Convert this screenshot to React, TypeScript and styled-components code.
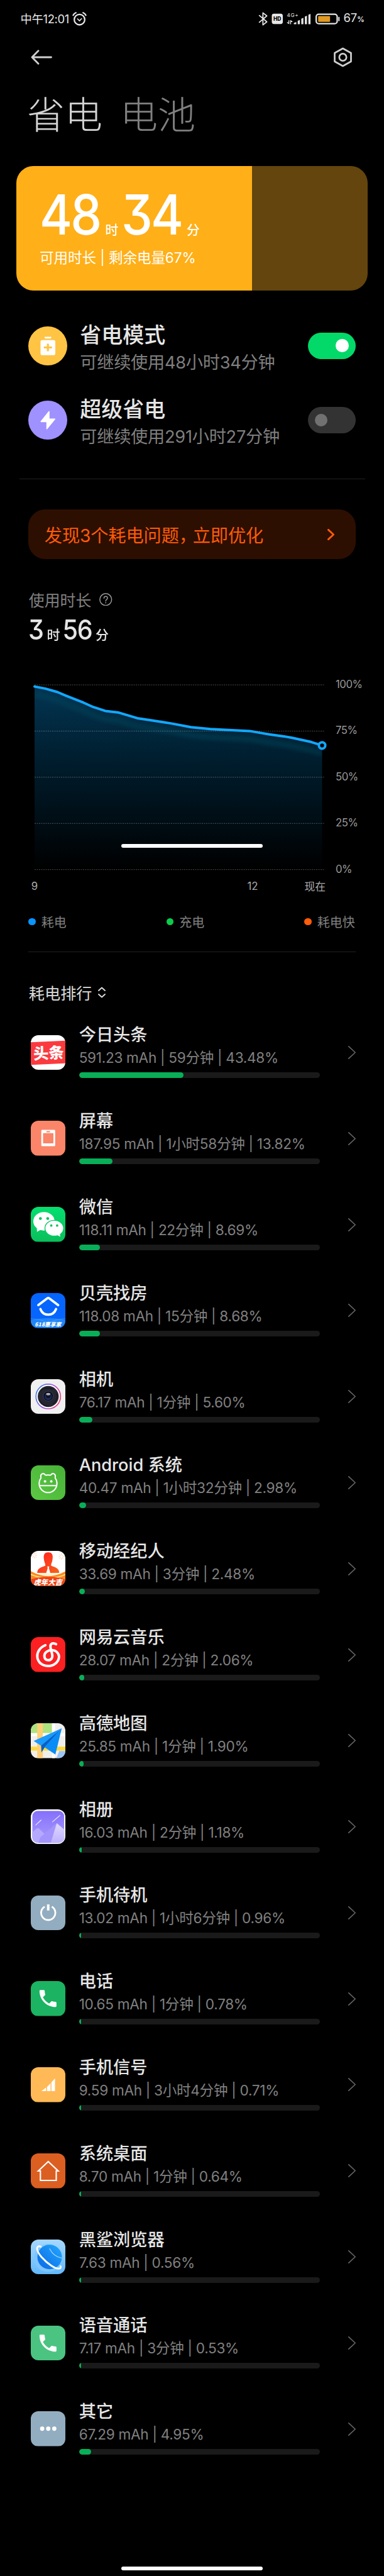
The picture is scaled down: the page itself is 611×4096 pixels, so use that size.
import React from "react";
import styled, { createGlobalStyle } from "styled-components";

const fontStack = `Inter, "Noto Sans CJK SC", "Noto Sans", sans-serif`;

const GlobalStyle = createGlobalStyle`
  html, body { margin: 0; padding: 0; background: #000; }
  body { font-family: ${fontStack}; color: #e6e6e6; -webkit-font-smoothing: antialiased; }
  * { box-sizing: border-box; }
`;

/* ---------- shell ---------- */

const Screen = styled.main`
  position: relative;
  width: 611px;
  height: 4096px;
  overflow: hidden;
  background: #000;
  white-space: nowrap;
`;

const GestureBar = styled.div<{ $top: number }>`
  position: absolute;
  top: ${(p) => p.$top}px;
  left: 192.5px;
  width: 225.5px;
  height: 6px;
  border-radius: 3px;
  background: #fff;
`;

const StatusBar = styled.header`
  display: flex;
  align-items: center;
  justify-content: space-between;
  height: 59px;
  padding: 0 31.5px 0 32.5px;
`;

const StatusGroup = styled.div`
  display: flex;
  align-items: center;
`;

const Clock = styled.span`
  font-size: 18.4px;
  line-height: 24px;
  letter-spacing: -0.35px;
  margin-right: 5px;
`;

const BatteryText = styled.span`
  font-size: 18.5px;
  line-height: 24px;
  letter-spacing: -0.2px;
  margin-left: 6px;
  small {
    font-size: 11.5px;
    font-weight: 600;
  }
`;

const NavBar = styled.nav`
  display: flex;
  align-items: center;
  justify-content: space-between;
  height: 63px;
  padding: 0 50px 0 49px;
`;

const Tabs = styled.div`
  display: flex;
  align-items: center;
  gap: 28px;
  height: 114px;
  padding: 0 43px;
`;

const Tab = styled.h1<{ $active?: boolean }>`
  margin: 0;
  font-family: "Noto Sans CJK SC", sans-serif;
  font-weight: 300;
  font-size: 60px;
  line-height: 80px;
  color: ${(p) => (p.$active ? "#d4d4d4" : "#808080")};
`;

/* ---------- battery card ---------- */

const BatteryCard = styled.section`
  height: 198px;
  margin: 28px 26px 0;
  padding: 38.5px 37px 0;
  border-radius: 27px;
  color: #fff;
  background: linear-gradient(90deg, #ffaf17 67%, #63450d 67%);
`;

/* Narrow numerals with flat-topped threes; the unit characters keep their own width. */
const Duration = styled.div<{ $size: number; $line: number; $space: number; $before: number; $after: number }>`
  display: flex;
  align-items: baseline;
  height: ${(p) => p.$line}px;
  font-size: ${(p) => p.$size}px;
  line-height: ${(p) => p.$line}px;
  font-weight: 500;
  letter-spacing: ${(p) => p.$space}px;
  font-feature-settings: "cv09" 1;
  transform: scaleX(0.9);
  transform-origin: left;
  small {
    font-size: 21px;
    letter-spacing: 0;
    margin: 0 ${(p) => p.$after}px 0 ${(p) => p.$before}px;
    transform: scaleX(1.11);
  }
`;

const CardCaption = styled.div`
  margin-top: 15.5px;
  font-size: 22.6px;
  line-height: 32px;
  letter-spacing: -0.1px;
`;

/* ---------- power modes ---------- */

const ModeList = styled.section`
  padding: 28.2px 45.3px 33.6px;
`;

const ModeRow = styled.div`
  display: flex;
  align-items: center;
  height: 118.7px;
`;

const ModeBadge = styled.div<{ $color: string }>`
  display: flex;
  width: 62px;
  height: 62px;
  border-radius: 50%;
  background: ${(p) => p.$color};
`;

const ModeText = styled.div`
  flex: 1;
  padding: 10.5px 0 0 20px;
`;

const ModeTitle = styled.div`
  font-size: 34px;
  line-height: 44px;
  font-weight: 500;
`;

const ModeNote = styled.div`
  font-size: 27.2px;
  line-height: 44px;
  letter-spacing: -0.25px;
  color: #7f7f7f;
`;

const Toggle = styled.div<{ $on?: boolean }>`
  display: flex;
  align-items: center;
  justify-content: ${(p) => (p.$on ? "flex-end" : "flex-start")};
  width: 76px;
  height: 42px;
  padding: 0 11px;
  border-radius: 21px;
  background: ${(p) => (p.$on ? "#02d968" : "#333")};
  &::after {
    content: "";
    width: 20.4px;
    height: 20.4px;
    border-radius: 50%;
    background: ${(p) => (p.$on ? "#fff" : "#717171")};
  }
`;

const Divider = styled.hr<{ $inset: number; $top?: number }>`
  height: 1px;
  margin: ${(p) => p.$top ?? 0}px ${(p) => p.$inset}px 0;
  border: 0;
  background: #202020;
`;

const Warning = styled.section`
  display: flex;
  align-items: center;
  justify-content: space-between;
  height: 78.7px;
  margin: 48px 45.3px 0;
  padding: 0 34px 0 25.5px;
  border-radius: 27px;
  background: #2d0f01;
  color: #ff5b08;
  font-size: 28.2px;
  letter-spacing: -0.1px;
`;

const Comma = styled.span`
  display: inline-block;
  width: 22px;
`;

/* ---------- usage chart ---------- */

const UsageLabel = styled.div`
  display: flex;
  align-items: center;
  gap: 13px;
  height: 36px;
  margin: 46px 45.8px 0;
  font-size: 24.9px;
  color: #808080;
`;

const UsageValue = styled.div`
  height: 118px;
  padding: 8px 45px 0;
`;

const ChartRow = styled.div`
  display: flex;
  height: 293.7px;
  padding-left: 55px;
`;

const ChartSvg = styled.svg`
  display: block;
  flex: none;
  overflow: visible;
`;

const PercentAxis = styled.div`
  display: flex;
  flex-direction: column;
  justify-content: space-between;
  margin: -1px 0 1px 17px;
  font-size: 16.8px;
  letter-spacing: -0.5px;
  color: #999;
  span {
    height: 0;
    line-height: 0;
  }
`;

const TimeAxis = styled.div`
  display: grid;
  grid-template-columns: 20px 327px 20px 106px;
  align-items: center;
  height: 52px;
  padding-left: 45px;
  font-size: 16.8px;
  color: #aaa;
  text-align: center;
  span:nth-child(2) {
    grid-column: 3;
  }
  span:nth-child(3) {
    text-align: right;
  }
`;

const Legend = styled.div`
  display: flex;
  align-items: center;
  height: 62px;
  padding-left: 45.3px;
`;

const LegendItem = styled.div<{ $color: string }>`
  display: flex;
  flex: none;
  align-items: center;
  gap: 9px;
  width: 219.5px;
  font-size: 20px;
  color: #808080;
  &:last-child {
    width: auto;
  }
  &::before {
    content: "";
    width: 11.4px;
    height: 11.4px;
    border-radius: 50%;
    background: ${(p) => p.$color};
  }
`;

/* ---------- ranking ---------- */

const RankHeader = styled.div`
  display: flex;
  align-items: center;
  gap: 8px;
  height: 54px;
  margin-top: 36.5px;
  padding-left: 45.8px;
  font-size: 25.2px;
  color: #dcdcdc;
`;

const RankList = styled.ul`
  list-style: none;
  margin: 0;
  padding: 0.5px 45.3px 0 48.6px;
`;

const RankRow = styled.li`
  display: flex;
  align-items: center;
  height: 136.81px;
`;

const AppIcon = styled.svg`
  display: block;
  flex: none;
  width: 55.5px;
  height: 55.5px;
  border-radius: 12px;
  overflow: hidden;
`;

const RankBody = styled.div`
  flex: 1;
  margin: 0 44.7px 0 21.6px;
  padding-bottom: 4px;
`;

const AppName = styled.div`
  font-size: 27.2px;
  line-height: 36px;
  font-weight: 500;
`;

const AppMeta = styled.div`
  font-size: 22.6px;
  line-height: 36px;
  letter-spacing: -0.3px;
  color: #808080;
`;

const Track = styled.div`
  height: 9px;
  margin-top: 5px;
  border-radius: 4.5px;
  background: #1a1a1a;
  overflow: hidden;
`;

const Fill = styled.div`
  height: 100%;
  min-width: 3px;
  border-radius: 4.5px;
  background: #09ae58;
`;

/* ---------- data ---------- */

// [share of the time axis, battery level]
const levels: [number, number][] = [
  [0, 99.1], [0.037, 98], [0.08, 96.1], [0.11, 94.1], [0.17, 90.4], [0.204, 88],
  [0.246, 85.9], [0.293, 85], [0.357, 82], [0.408, 80.8], [0.476, 79.1],
  [0.544, 77.1], [0.612, 76.1], [0.749, 75], [0.783, 74.1], [0.817, 73.2],
  [0.868, 72.1], [0.894, 71.4], [0.962, 69.1], [1, 67.2],
];

const PLOT_W = 457.5;
const PLOT_H = 293.7;
const linePath = levels
  .map(([t, v], i) => `${i ? "L" : "M"}${(t * PLOT_W).toFixed(1)} ${((1 - v / 100) * PLOT_H).toFixed(1)}`)
  .join(" ");
const endY = (1 - levels[levels.length - 1][1] / 100) * PLOT_H;

const CALL =
  "M6.62 10.79c1.44 2.83 3.76 5.14 6.59 6.59l2.2-2.2c.27-.27.67-.36 1.02-.24 1.12.37 2.33.57 3.57.57.55 0 1 .45 1 1V20c0 .55-.45 1-1 1-9.39 0-17-7.61-17-17 0-.55.45-1 1-1h3.5c.55 0 1 .45 1 1 0 1.25.2 2.45.57 3.57.11.35.03.74-.25 1.02l-2.2 2.2z";

const callIcon = (bg: string) => (
  <>
    <rect width="98" height="98" fill={bg} />
    <path d={CALL} fill="#fff" transform="translate(16.5 17) scale(2.65)" />
  </>
);

const cjkBold = { fontFamily: '"Noto Sans CJK SC", sans-serif', fontWeight: 900 } as const;

const icons: Record<string, React.ReactNode> = {
  toutiao: (
    <>
      <rect width="98" height="98" fill="#fff" />
      <path d="M0 20L98 15.500V79L0 83.500Z" fill="#fb3a3f" />
      <text x="7" y="66" fontSize="43" fill="#fff" transform="rotate(-2.500 49 49)" {...cjkBold}>头条</text>
    </>
  ),
  screen: (
    <>
      <rect width="98" height="98" fill="#fa8569" />
      <path fillRule="evenodd" fill="#fff" d="M32 25.700h34a2.500 2.500 0 0 1 2.500 2.500v41a2.500 2.500 0 0 1-2.500 2.500H32a2.500 2.500 0 0 1-2.500-2.500v-41a2.500 2.500 0 0 1 2.500-2.500zM34.500 35v28.500h29V35zM44 29v3.500h10V29z" />
    </>
  ),
  wechat: (
    <>
      <defs>
        <linearGradient id="wx" x1="0" y1="0" x2="0" y2="1">
          <stop offset="0" stopColor="#05de70" />
          <stop offset="1" stopColor="#0abf5b" />
        </linearGradient>
      </defs>
      <rect width="98" height="98" fill="url(#wx)" />
      <path d="M17 60L17.500 70L30 63Z" fill="#fff" />
      <ellipse cx="37" cy="40.500" rx="30" ry="26" fill="#fff" />
      <circle cx="27" cy="32.500" r="4" fill="#07c160" />
      <circle cx="47.500" cy="32.500" r="4" fill="#07c160" />
      <ellipse cx="66" cy="60" rx="27.500" ry="23.500" fill="#09c862" />
      <ellipse cx="66" cy="60" rx="25" ry="21" fill="#fff" />
      <path d="M72 78L83 84L81 72Z" fill="#fff" />
      <circle cx="57.500" cy="52.500" r="3.300" fill="#07c160" />
      <circle cx="74" cy="52.500" r="3.300" fill="#07c160" />
    </>
  ),
  beike: (
    <>
      <rect width="98" height="98" fill="#0565fe" />
      <path d="M0 76C30 69 68 69 98 76V98H0Z" fill="#2185f8" />
      <path d="M0 72C30 74 50 80 60 98M98 72C68 74 48 80 38 98" stroke="#56aefb" strokeWidth="1" fill="none" />
      <path d="M21 34L46 15Q49 13 52 15L77 34" stroke="#fff" strokeWidth="6.500" strokeLinecap="round" fill="none" />
      <path d="M27 45C35 66 63 66 71 45" stroke="#fff" strokeWidth="6.500" strokeLinecap="round" fill="none" />
      <text x="11" y="94" fontSize="15" fill="#fff" fontStyle="italic" textLength="74" {...cjkBold}>618惠享家</text>
    </>
  ),
  camera: (
    <>
      <defs>
        <linearGradient id="ring" x1="0" y1="0.300" x2="1" y2="0.700">
          <stop offset="0" stopColor="#4a82e6" />
          <stop offset="0.500" stopColor="#a45ae8" />
          <stop offset="1" stopColor="#f2406e" />
        </linearGradient>
      </defs>
      <rect width="98" height="98" fill="#f0f0f1" />
      <circle cx="49" cy="48.500" r="34.500" fill="#fff" stroke="url(#ring)" strokeWidth="3" />
      <circle cx="49" cy="48.500" r="29.500" fill="#25262f" />
      <path d="M27 33Q40 20 62 28M73 40Q78 58 62 70M51 76Q32 74 24 58" stroke="#0f1016" strokeWidth="1.500" fill="none" />
      <circle cx="49" cy="47.500" r="14" fill="#0c0d18" stroke="#3b4468" strokeWidth="1.500" />
      <circle cx="49" cy="48.500" r="10" fill="#1f2a66" />
      <circle cx="49" cy="46.500" r="7" fill="#11131f" />
      <ellipse cx="49" cy="42" rx="6" ry="3.500" fill="#a9adb8" />
    </>
  ),
  android: (
    <>
      <defs>
        <linearGradient id="droid" x1="0" y1="1" x2="1" y2="0">
          <stop offset="0" stopColor="#5cc944" />
          <stop offset="1" stopColor="#47b137" />
        </linearGradient>
      </defs>
      <rect width="98" height="98" fill="url(#droid)" />
      <g fill="none" stroke="#fff" strokeWidth="3.600" strokeLinejoin="round">
        <path d="M29 35C25 25 36 18 41 28M56 28C61 18 72 25 68 35" />
        <path d="M41 28Q48.500 26 56 28M68 35A25 25.500 0 1 1 29 35" />
        <path d="M23.500 57H73.500" />
      </g>
      <circle cx="40" cy="45" r="3.600" fill="#fff" />
      <circle cx="57.500" cy="45" r="3.600" fill="#fff" />
    </>
  ),
  agent: (
    <>
      <defs>
        <linearGradient id="man" x1="0" y1="0" x2="1" y2="1">
          <stop offset="0.200" stopColor="#ff2a1f" />
          <stop offset="1" stopColor="#f4661b" />
        </linearGradient>
      </defs>
      <rect width="98" height="98" fill="#fff" />
      <path d="M2 12l5 1M18 12l-5 1M10 4v5M10 21v-5M4 6l4 4M16 6l-4 4M4 19l4-4M16 19l-4-4M78 16l5 0M94 16l-5 0M86 7v5M86 25v-5M80 10l4 4M92 10l-4 4M80 22l4-4M92 22l-4-4" stroke="#f3a981" strokeWidth="1" />
      <path d="M0 57Q49 84 98 57V98H0Z" fill="#ff8a1e" />
      <path d="M0 66Q49 88 98 66" stroke="#ffe08a" strokeWidth="3" fill="none" />
      <path d="M22 62H77Q49 80 22 62Z" fill="#fff3cf" />
      <path d="M0 80Q49 66 98 80V98H0Z" fill="#ef4318" />
      <path d="M49 4C38 4 35 12 37 24C38 33 41 35 41 41C34 46 18 46 18 62H80C80 46 64 46 57 41C57 35 60 33 61 24C63 12 60 4 49 4Z" fill="url(#man)" />
      <path d="M46 43.500H52L51 48L55 63H43L47.500 48Z" fill="#fff" />
      <text x="8" y="95" fontSize="20" fill="#fff" fontStyle="italic" {...cjkBold}>虎年大吉</text>
    </>
  ),
  netease: (
    <>
      <rect width="98" height="98" fill="#fb2022" />
      <path d="M41 23C23 30 16 46 19 60C24 79 44 84 58 80C78 74 84 55 75 44C69 36 54 34 45 41C34 49 37 65 49 65C58 65 62 58 60 48L55.500 30C53 18 62 15 71 20" fill="none" stroke="#fff" strokeWidth="7" strokeLinecap="round" strokeLinejoin="round" />
    </>
  ),
  amap: (
    <>
      <rect width="98" height="98" fill="#f0efec" />
      <rect width="59" height="28" fill="#aee27f" />
      <path d="M0 32H98M64 0V98" stroke="#fff" strokeWidth="8" />
      <rect y="66" width="98" height="11" fill="#fdd93c" />
      <rect x="18" width="16" height="98" fill="#ffcf75" />
      <path d="M72 98L80 78H98V98Z" fill="#9cc4f8" />
      <path d="M8 50L87 14L30 64Z" fill="#1a9bff" />
      <path d="M29 63L87 14L39 68L30 82Z" fill="#0a5fc0" />
      <path d="M38 67L87 14L69 88Z" fill="#0a8cf7" />
    </>
  ),
  album: (
    <>
      <defs>
        <linearGradient id="sky" x1="0" y1="0" x2="0" y2="1">
          <stop offset="0" stopColor="#8370fb" />
          <stop offset="1" stopColor="#ab9dfc" />
        </linearGradient>
        <linearGradient id="snow" x1="0" y1="0" x2="0" y2="1">
          <stop offset="0" stopColor="#e0d9ff" />
          <stop offset="1" stopColor="#bcafff" />
        </linearGradient>
        <clipPath id="albumClip"><rect x="4" y="4" width="90" height="90" rx="16" /></clipPath>
      </defs>
      <rect width="98" height="98" fill="#fff" />
      <g clipPath="url(#albumClip)">
        <rect x="4" y="4" width="90" height="90" fill="url(#sky)" />
        <path d="M0 68L18 53Q20 52 22 53L40 70L52 98H0Z" fill="#b5a9fd" />
        <path d="M27 78L70 41Q73 38 76 41L98 60V98H20Z" fill="#a394fb" />
        <path d="M55 98L73 39L98 60V98Z" fill="url(#snow)" />
        <path d="M14 44L29 30M61 35L82 17" stroke="#efe9ff" strokeWidth="2" strokeLinecap="round" />
      </g>
    </>
  ),
  standby: (
    <>
      <rect width="98" height="98" fill="#93adc0" />
      <path d="M39 31.500A20 20 0 1 0 59 31.500" fill="none" stroke="#fff" strokeWidth="5" />
      <rect x="45.500" y="25" width="7" height="17" fill="#fff" />
    </>
  ),
  phone: callIcon("#1cb362"),
  signal: (
    <>
      <rect width="98" height="98" fill="#ffb957" />
      <path d="M30 67L43 57V67ZM45.500 55.500L55.500 45V67H45.500ZM58 42.500L68 31.500V67H58Z" fill="#fff" />
    </>
  ),
  desktop: (
    <>
      <rect width="98" height="98" fill="#dc5f22" />
      <path d="M21 49.500L49 23L77 49.500H71.500V76H27V49.500Z" fill="none" stroke="#fff" strokeWidth="3.800" strokeLinejoin="miter" />
    </>
  ),
  browser: (
    <>
      <defs>
        <linearGradient id="bsky" x1="0" y1="0" x2="0" y2="1">
          <stop offset="0" stopColor="#a5d8ff" />
          <stop offset="1" stopColor="#63b8fd" />
        </linearGradient>
        <linearGradient id="planet" x1="0" y1="1" x2="1" y2="0">
          <stop offset="0" stopColor="#0a68e6" />
          <stop offset="1" stopColor="#23a8fc" />
        </linearGradient>
      </defs>
      <rect width="98" height="98" fill="url(#bsky)" />
      <circle cx="48" cy="52" r="39" fill="#7fc6fe" />
      <circle cx="53" cy="49" r="34.500" fill="url(#planet)" />
      <path d="M53 26Q64 48 87 52" stroke="#a9dcff" strokeWidth="2" fill="none" strokeLinecap="round" />
      <path d="M28 20C14 15 14 30 30 49C46 67 70 85 82 81Q85 79 83.500 75" stroke="#fff" strokeWidth="5" fill="none" strokeLinecap="round" />
    </>
  ),
  voice: callIcon("#4bc482"),
  other: (
    <>
      <rect width="98" height="98" fill="#93adc0" />
      <circle cx="32" cy="49" r="6" fill="#fff" />
      <circle cx="49" cy="49" r="6" fill="#fff" />
      <circle cx="66" cy="49" r="6" fill="#fff" />
    </>
  ),
};

const apps = [
  { icon: "toutiao", name: "今日头条", mah: "591.23", time: "59分钟", share: 43.48 },
  { icon: "screen", name: "屏幕", mah: "187.95", time: "1小时58分钟", share: 13.82 },
  { icon: "wechat", name: "微信", mah: "118.11", time: "22分钟", share: 8.69 },
  { icon: "beike", name: "贝壳找房", mah: "118.08", time: "15分钟", share: 8.68 },
  { icon: "camera", name: "相机", mah: "76.17", time: "1分钟", share: 5.6 },
  { icon: "android", name: "Android 系统", mah: "40.47", time: "1小时32分钟", share: 2.98 },
  { icon: "agent", name: "移动经纪人", mah: "33.69", time: "3分钟", share: 2.48 },
  { icon: "netease", name: "网易云音乐", mah: "28.07", time: "2分钟", share: 2.06 },
  { icon: "amap", name: "高德地图", mah: "25.85", time: "1分钟", share: 1.9 },
  { icon: "album", name: "相册", mah: "16.03", time: "2分钟", share: 1.18 },
  { icon: "standby", name: "手机待机", mah: "13.02", time: "1小时6分钟", share: 0.96 },
  { icon: "phone", name: "电话", mah: "10.65", time: "1分钟", share: 0.78 },
  { icon: "signal", name: "手机信号", mah: "9.59", time: "3小时4分钟", share: 0.71 },
  { icon: "desktop", name: "系统桌面", mah: "8.70", time: "1分钟", share: 0.64 },
  { icon: "browser", name: "黑鲨浏览器", mah: "7.63", time: "", share: 0.56 },
  { icon: "voice", name: "语音通话", mah: "7.17", time: "3分钟", share: 0.53 },
  { icon: "other", name: "其它", mah: "67.29", time: "", share: 4.95 },
];

/* ---------- small drawings ---------- */

const AlarmIcon = () => (
  <svg width="23" height="22" viewBox="0 0 40 38" fill="none" stroke="#e6e6e6" strokeLinecap="round">
    <circle cx="20" cy="21" r="14.500" strokeWidth="4" />
    <path d="M14.500 19L20 24.500L25.500 18.500" strokeWidth="3" strokeLinejoin="round" />
    <path d="M2.500 9Q5 4 10 2M37.500 9Q35 4 30 2" strokeWidth="4" />
  </svg>
);

const StatusIcons = () => (
  <svg width="130" height="24" viewBox="0 0 230 42" fill="none">
    <path d="M3 11.500L24 29.500L13 38V4L24 12.500L3 30.500" stroke="#e6e6e6" strokeWidth="3.200" strokeLinejoin="round" strokeLinecap="round" />
    <rect x="38" y="6.500" width="31" height="29" rx="6" fill="#e6e6e6" />
    <text x="53.500" y="26.500" textAnchor="middle" fontSize="15" fontWeight="800" fontFamily="Inter" fill="#000">HD</text>
    <text x="80.500" y="15.500" fontSize="14.500" fontFamily="Inter" fill="#e6e6e6" textLength="32">4G+</text>
    <path d="M86 25V34L81 31M91 36V26L96 29" stroke="#e6e6e6" strokeWidth="2.400" />
    <path d="M100 36V32.500L107 30V36ZM111 36V26.500L117 24V36ZM121 36V20.500L127 18V36ZM131 36V14.500L137 12V36ZM141 36V9.500L147 7V36Z" fill="#e6e6e6" />
    <rect x="163" y="8" width="59" height="26.500" rx="7" stroke="#e6e6e6" strokeWidth="4" />
    <rect x="168.500" y="13" width="33.500" height="16.500" rx="2" fill="#e29a22" />
    <path d="M227 17V26" stroke="#e6e6e6" strokeWidth="3.500" strokeLinecap="round" />
  </svg>
);

const BackIcon = () => (
  <svg width="34" height="24" viewBox="0 0 34 24" fill="none" stroke="#cfcfcf" strokeWidth="2.800" strokeLinecap="round" strokeLinejoin="round">
    <path d="M32.500 12H2M12 1.800L2 12L12 22.200" />
  </svg>
);

const SettingsIcon = () => (
  <svg width="31" height="32" viewBox="0 0 31 32" fill="none" stroke="#cfcfcf" strokeWidth="2.700" strokeLinejoin="round">
    <path d="M15.500 2L28.500 9.300V22.700L15.500 30L2.500 22.700V9.300Z" />
    <circle cx="15.500" cy="16" r="5.700" />
  </svg>
);

const Chevron = ({ color, weight, w, h }: { color: string; weight: number; w: number; h: number }) => (
  <svg width={w} height={h} viewBox={`0 0 ${w} ${h}`} fill="none" stroke={color} strokeWidth={weight} strokeLinecap="round" strokeLinejoin="round">
    <path d={`M${weight / 2} ${weight / 2}L${w - weight / 2} ${h / 2}L${weight / 2} ${h - weight / 2}`} />
  </svg>
);

const BatteryChart = () => (
  <ChartSvg width="462" height={PLOT_H} viewBox={`0 0 462 ${PLOT_H}`}>
    <defs>
      <linearGradient id="area" gradientUnits="userSpaceOnUse" x1="0" y1="0" x2="0" y2={PLOT_H}>
        <stop offset="0" stopColor="#033654" />
        <stop offset="0.380" stopColor="#001f30" />
        <stop offset="0.720" stopColor="#000e16" />
        <stop offset="1" stopColor="#000" />
      </linearGradient>
      <clipPath id="areaClip">
        <path d={`${linePath} V${PLOT_H} H0 Z`} />
      </clipPath>
      <filter id="soft" x="-10%" y="-20%" width="120%" height="150%">
        <feGaussianBlur stdDeviation="3" />
      </filter>
    </defs>
    <path d={`${linePath} V${PLOT_H} H0 Z`} fill="url(#area)" />
    <g clipPath="url(#areaClip)">
      <path d={linePath} transform="translate(0 13)" fill="none" stroke="#0d4a5e" strokeOpacity="0.450" strokeWidth="8" filter="url(#soft)" />
    </g>
    {[0, 25, 50, 75, 100].map((v) => (
      <line key={v} x1="0" x2="462" y1={(PLOT_H * v) / 100} y2={(PLOT_H * v) / 100} stroke="#fff" strokeOpacity="0.300" strokeWidth="1" strokeDasharray="2 1.500" />
    ))}
    <path d={linePath} fill="none" stroke="#12a8ff" strokeWidth="4" strokeLinejoin="round" strokeLinecap="round" />
    <circle cx={PLOT_W} cy={endY} r="5.100" fill="#000" stroke="#12a8ff" strokeWidth="3.900" />
  </ChartSvg>
);

export default function App() {
  return (
    <Screen>
      <GlobalStyle />
      <StatusBar>
        <StatusGroup>
          <Clock>中午12:01</Clock>
          <AlarmIcon />
        </StatusGroup>
        <StatusGroup>
          <StatusIcons />
          <BatteryText>67<small>%</small></BatteryText>
        </StatusGroup>
      </StatusBar>
      <NavBar>
        <BackIcon />
        <SettingsIcon />
      </NavBar>
      <Tabs>
        <Tab $active>省电</Tab>
        <Tab>电池</Tab>
      </Tabs>

      <BatteryCard>
        <Duration $size={88} $line={76} $space={-3} $before={9.5} $after={6.7}>
          48<small>时</small>34<small>分</small>
        </Duration>
        <CardCaption>可用时长 | 剩余电量67%</CardCaption>
      </BatteryCard>

      <ModeList>
        <ModeRow>
          <ModeBadge $color="#ffc444">
            <svg width="62" height="62" viewBox="0 0 62 62">
              <rect x="26" y="16.500" width="10.500" height="2.800" rx="0.800" fill="#fff" />
              <rect x="19.500" y="21.700" width="23.500" height="24" rx="2.800" fill="#fff" />
              <path d="M24.700 33.500H37.700M31.200 27.500V39.500" stroke="#ffc444" strokeWidth="3.200" />
            </svg>
          </ModeBadge>
          <ModeText>
            <ModeTitle>省电模式</ModeTitle>
            <ModeNote>可继续使用48小时34分钟</ModeNote>
          </ModeText>
          <Toggle $on />
        </ModeRow>
        <ModeRow>
          <ModeBadge $color="#9f91ff">
            <svg width="62" height="62" viewBox="0 0 62 62">
              <path d="M33.800 17V28.500H42.500Q43.500 28.700 42.900 29.800L30 45.500Q29 46.300 28.800 45V34.300H20.300Q19 34 19.700 32.800L32.300 17Q33.600 15.800 33.800 17Z" fill="#fff" />
            </svg>
          </ModeBadge>
          <ModeText>
            <ModeTitle>超级省电</ModeTitle>
            <ModeNote>可继续使用291小时27分钟</ModeNote>
          </ModeText>
          <Toggle />
        </ModeRow>
      </ModeList>
      <Divider $inset={30.5} />

      <Warning>
        <span>发现3个耗电问题<Comma>，</Comma>立即优化</span>
        <Chevron color="#ff5b08" weight={2.8} w={11} h={18} />
      </Warning>

      <UsageLabel>
        使用时长
        <svg width="20.500" height="20.500" viewBox="0 0 36 36" fill="none" stroke="#999" strokeWidth="2.600">
          <circle cx="18" cy="18" r="16.500" />
          <path d="M13 14.500C13 7.500 23 7.500 23 14C23 18 18 17.500 18 22.500" strokeLinecap="round" />
          <circle cx="18" cy="27" r="1.600" fill="#999" stroke="none" />
        </svg>
      </UsageLabel>
      <UsageValue>
        <Duration $size={44} $line={44} $space={-1.5} $before={7.5} $after={6}>
          3<small>时</small>56<small>分</small>
        </Duration>
      </UsageValue>

      <ChartRow>
        <BatteryChart />
        <PercentAxis>
          <span>100%</span>
          <span>75%</span>
          <span>50%</span>
          <span>25%</span>
          <span>0%</span>
        </PercentAxis>
      </ChartRow>
      <TimeAxis>
        <span>9</span>
        <span>12</span>
        <span>现在</span>
      </TimeAxis>
      <Legend>
        <LegendItem $color="#0a94ff">耗电</LegendItem>
        <LegendItem $color="#09ce4b">充电</LegendItem>
        <LegendItem $color="#ff5c0b">耗电快</LegendItem>
      </Legend>
      <Divider $inset={45.3} $top={16.5} />

      <RankHeader>
        耗电排行
        <svg width="14" height="18" viewBox="0 0 14 18" fill="none" stroke="#dcdcdc" strokeWidth="1.900" strokeLinecap="round" strokeLinejoin="round">
          <path d="M2 6L7 1.500L12 6M2 12L7 16.500L12 12" />
        </svg>
      </RankHeader>
      <RankList>
        {apps.map((a) => (
          <RankRow key={a.icon}>
            <AppIcon viewBox="0 0 98 98">{icons[a.icon]}</AppIcon>
            <RankBody>
              <AppName>{a.name}</AppName>
              <AppMeta>{[`${a.mah} mAh`, a.time, `${a.share.toFixed(2)}%`].filter(Boolean).join(" | ")}</AppMeta>
              <Track>
                <Fill style={{ width: `${a.share}%` }} />
              </Track>
            </RankBody>
            <Chevron color="#666" weight={1.6} w={12} h={21} />
          </RankRow>
        ))}
      </RankList>

      <GestureBar $top={1342} />
      <GestureBar $top={4081} />
    </Screen>
  );
}
